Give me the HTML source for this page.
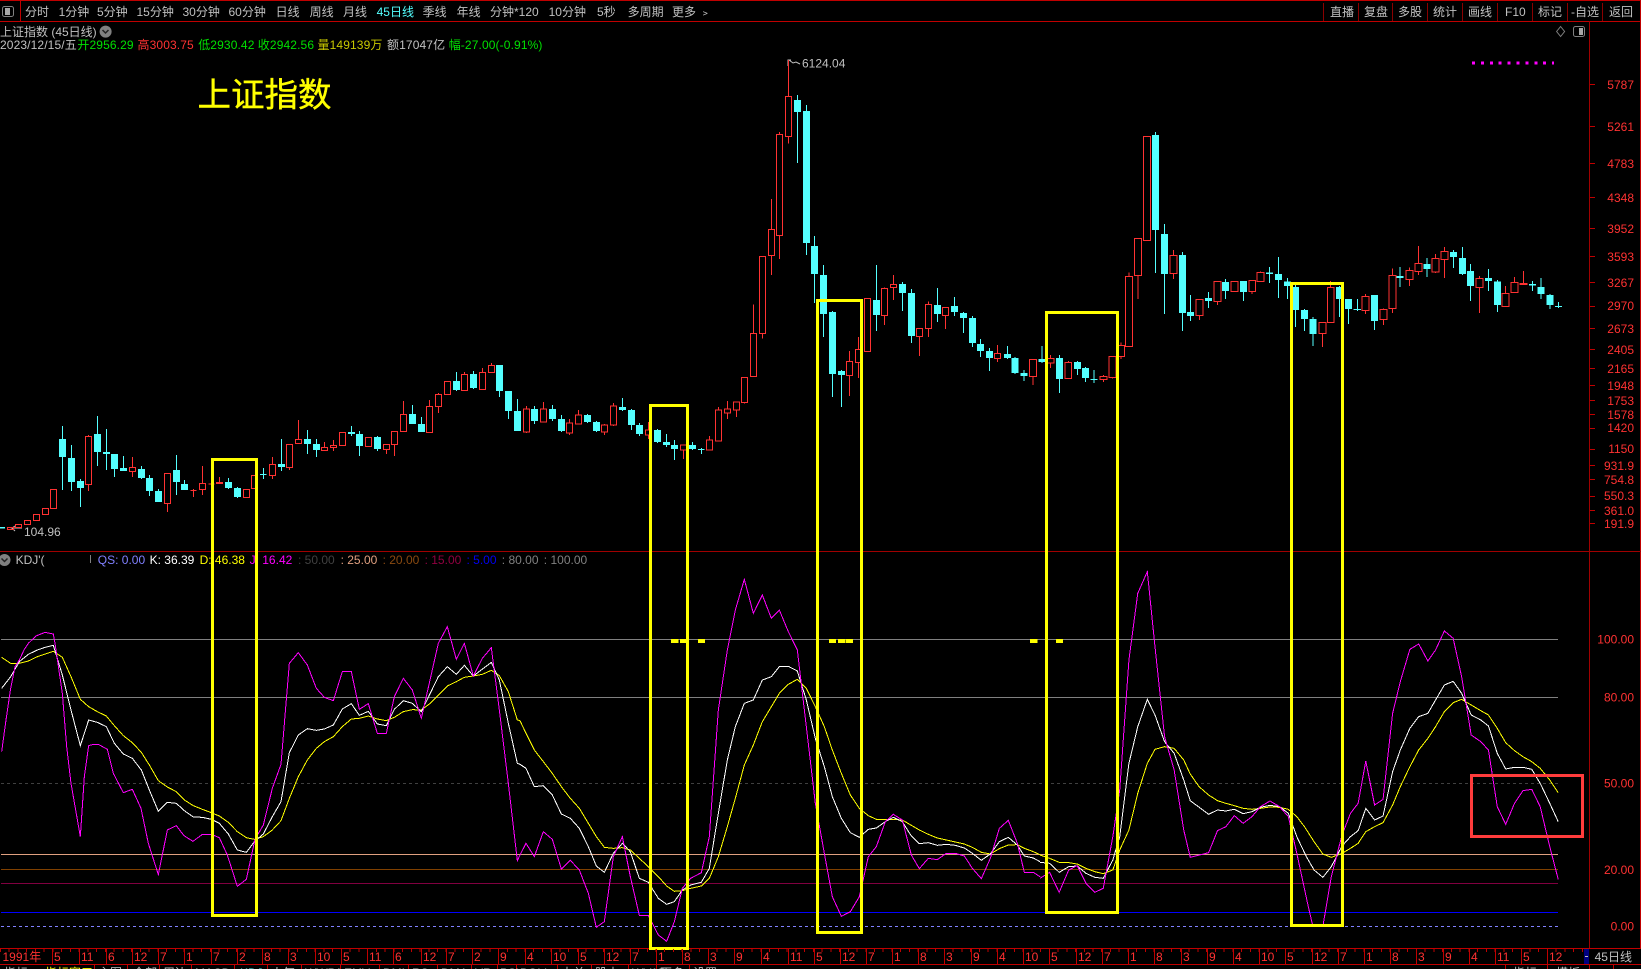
<!DOCTYPE html>
<html lang="zh"><head><meta charset="utf-8"><title>上证指数</title>
<style>
html,body{margin:0;padding:0;background:#000;width:1641px;height:969px;overflow:hidden}
svg{display:block;font-family:"Liberation Sans","WenQuanYi Zen Hei","Noto Sans CJK SC",sans-serif;font-size:12px}
path,polyline,line,rect{vector-effect:non-scaling-stroke}
.c{shape-rendering:crispEdges}
polyline{fill:none;stroke-width:1;shape-rendering:crispEdges}
.red{fill:none;stroke:#ff3232;stroke-width:1}
.cw{fill:none;stroke:#54ffff;stroke-width:1}
.cb{fill:none;stroke:#54ffff;stroke-width:7}
.J{stroke:#ff00ff}.K{stroke:#fff}.D{stroke:#ff0}
.t text{fill:#c0c0c0}
.q{letter-spacing:.12px}
.ax text{fill:#ff3232;text-anchor:end}
.tm text{fill:#ff3232}
</style></head><body>
<svg width="1641" height="969" viewBox="0 0 1641 969" xmlns="http://www.w3.org/2000/svg">
<rect width="1641" height="969" fill="#000"/>
<!-- frame -->
<g class="c" fill="none">
<path d="M0 .5H1641M0 21.5H1641M1640.5 0V949M20.5 0V21" stroke="#c00000"/>
<path d="M1323.5 3V21M1358.5 3V21M1392.5 3V21M1427.5 3V21M1462.5 3V21M1497.5 3V21M1532.5 3V21M1567.5 3V21M1602.5 3V21" stroke="#8a0000"/>
<path d="M1589.5 21V949M0 551.5H1641" stroke="#a00000"/>
<path d="M0 948.5H1641M0 964.5H1641" stroke="#c00000"/>
<path d="M1590 84.5h5M1590 126.5h5M1590 163.5h5M1590 197.5h5M1590 228.5h5M1590 256.5h5M1590 282.5h5M1590 306.5h5M1590 328.5h5M1590 349.5h5M1590 368.5h5M1590 385.5h5M1590 400.5h5M1590 414.5h5M1590 428.5h5M1590 449.5h5M1590 465.5h5M1590 479.5h5M1590 496.5h5M1590 510.5h5M1590 523.5h5" stroke="#c00000"/>
</g>
<!-- toolbar icon -->
<rect x="2.5" y="6.5" width="11" height="10" rx="2" fill="none" stroke="#808080"/><rect x="5" y="8" width="5" height="7" fill="#a8a8a8"/>
<!-- toolbar -->
<g class="t">
<text x="25" y="16">分时</text><text x="58.6" y="16">1分钟</text><text x="97" y="16">5分钟</text><text x="136.5" y="16">15分钟</text><text x="182.5" y="16">30分钟</text><text x="228.5" y="16">60分钟</text><text x="275.6" y="16">日线</text><text x="309.6" y="16">周线</text><text x="343" y="16">月线</text><text x="376.6" y="16" style="fill:#54ffff">45日线</text><text x="422.6" y="16">季线</text><text x="456.6" y="16">年线</text><text x="490" y="16">分钟*120</text><text x="548.6" y="16">10分钟</text><text x="597" y="16">5秒</text><text x="627.6" y="16">多周期</text><text x="672" y="16">更多 ﹥</text>
<text x="1330" y="16">直播</text><text x="1364" y="16">复盘</text><text x="1398" y="16">多股</text><text x="1433" y="16">统计</text><text x="1468" y="16">画线</text><text x="1505" y="16">F10</text><text x="1538" y="16">标记</text><text x="1571" y="16">-自选</text><text x="1609" y="16">返回</text>
<text x="0" y="36">上证指数 (45日线)</text>
<text x="0" y="49" class="q">2023/12/15/五</text>
<text x="387" y="49" class="q">额17047亿</text>
<text x="24" y="536">104.96</text>
<text x="802" y="67.500">6124.04</text>
<text x="15.600" y="564">KDJ'(</text>
</g>
<g>
<text x="77.400" y="49" fill="#00e000" class="q">开2956.29</text>
<text x="137.500" y="49" fill="#ff3232" class="q">高3003.75</text>
<text x="198.200" y="49" fill="#00e000" class="q">低2930.42</text>
<text x="257.800" y="49" fill="#00e000" class="q">收2942.56</text>
<text x="317.500" y="49" fill="#c8c800" class="q">量149139万</text>
<text x="448.700" y="49" fill="#00e000" class="q">幅-27.00(-0.91%)</text>
</g>
<circle cx="105.600" cy="31.600" r="6" fill="#808080"/><path d="M102.500 30l3 3 3-3" fill="none" stroke="#222" stroke-width="1.500"/>
<text x="197.500" y="106.500" fill="#ff0" stroke="#ff0" stroke-width=".4" style="font-family:'Noto Sans CJK SC',sans-serif;font-size:33.500px">上证指数</text>
<path d="M1560.600 26.500l4 5-4 5-4-5z" fill="none" stroke="#808080"/>
<rect x="1573.500" y="26.500" width="11" height="10" rx="2" fill="none" stroke="#808080"/><rect x="1579" y="28" width="4" height="7" fill="#a8a8a8"/>
<path class="c" d="M1472 63h82" stroke="#ff00ff" stroke-width="3" stroke-dasharray="3 5.900" fill="none"/>
<path d="M788 66v-6l3 0M789 60l4 3 3-1 4 2M22 528h-10l3-2M12 528l3 3" fill="none" stroke="#c0c0c0"/>
<g class="ax">
<text x="1634" y="89">5787</text><text x="1634" y="131">5261</text><text x="1634" y="168">4783</text><text x="1634" y="202">4348</text><text x="1634" y="233">3952</text><text x="1634" y="261">3593</text><text x="1634" y="287">3267</text><text x="1634" y="310">2970</text><text x="1634" y="333">2673</text><text x="1634" y="354">2405</text><text x="1634" y="373">2165</text><text x="1634" y="390">1948</text><text x="1634" y="405">1753</text><text x="1634" y="419">1578</text><text x="1634" y="432">1420</text><text x="1634" y="453">1150</text><text x="1634" y="470">931.9</text><text x="1634" y="484">754.8</text><text x="1634" y="500">550.3</text><text x="1634" y="515">361.0</text><text x="1634" y="528">191.9</text>
<text x="1634" y="643.500">100.00</text><text x="1634" y="701.500">80.00</text><text x="1634" y="787.500">50.00</text><text x="1634" y="874">20.00</text><text x="1634" y="930.500">0.00</text>
</g>
<!-- indicator legend -->
<circle cx="4.500" cy="560" r="6" fill="#808080"/><path d="M1.500 558.500l3 3 3-3" fill="none" stroke="#222" stroke-width="1.500"/>
<path d="M90.500 555v8" stroke="#808080"/>
<g>
<text x="97.800" y="564" fill="#8080ff">QS: 0.00</text><text x="149.600" y="564" fill="#fff">K: 36.39</text><text x="199.600" y="564" fill="#ff0">D: 46.38</text><text x="249.600" y="564" fill="#ff00ff">J: 16.42</text>
<text x="298" y="564" fill="#404040">: 50.00</text><text x="340.600" y="564" fill="#e0a080">: 25.00</text><text x="382.600" y="564" fill="#8a4a10">: 20.00</text><text x="424.600" y="564" fill="#900040">: 15.00</text><text x="466.500" y="564" fill="#0000f0">: 5.00</text><text x="501.800" y="564" fill="#808080">: 80.00</text><text x="543.800" y="564" fill="#808080">: 100.00</text>
</g>
<!-- KDJ reference lines -->
<g class="c" fill="none">
<path d="M1 639.500H1558M1 697.500H1558" stroke="#808080"/>
<path d="M1 783.500H1558" stroke="#404040" stroke-dasharray="3 3"/>
<path d="M1 854.500H1558" stroke="#e0a080"/>
<path d="M1 869.500H1558" stroke="#804000"/>
<path d="M1 883.500H1558" stroke="#800040"/>
<path d="M1 912.500H1558" stroke="#0000ff" />
<path d="M1 926.500H1558" stroke="#8080ff" stroke-dasharray="3 3"/>
</g>
<!-- candles -->
<g class="c">
<g transform="translate(0,360) scale(.33333)">
<path class="cw" d="M187 198V390M214 255V393M241 357V441M292 168V318M319 207V330M343 282V351M370 288V333M424 318V357M448 345V408M475 387V426M529 285V405M553 360V390M685 354V387M712 381V414M780 343.500H800M790 324V357M844 237V333M922 210V282M949 237V291M1054 198V228M1078 213V288M1132 228V273M1237 135V192M1264 171V216M1369 36V93M1420 33V87"/>
<path class="cb" d="M187 237V291M214 294V366M241 363V384M292 222V276M319 276V282M343 282V327M370 324V333M424 327V354M448 354V393M475 393V426M529 330V366M553 372V390M685 366V384M712 384V411M844 312V321M922 237V252M949 252V270M1054 216V222M1078 222V258M1132 231V267M1237 162V192M1264 192V216M1369 63V90M1420 42V84"/>
<path d="M0 504H15" stroke="#54ffff" stroke-width="1.500" fill="none"/>
<path class="red" d="M22 502h19V509h-19zM46 493h18V503h-18zM73 482h18V493h-18zM100 463h18V482h-18zM127 445h18V464h-18zM151 388h18V446h-18zM256 229h18V374h-18zM265 225V229M265 374V393M388 322h18V334h-18zM397 291V322M397 334V351M493 340h18V431h-18zM502 431V456M571 391H589M580 387V411M598 370h18V388h-18zM607 318V370M607 388V405M625 372H643M649 367h18V371h-18zM658 351V367M730 388h18V413h-18zM754 346h18V386h-18zM808 313h18V347h-18zM817 291V313M817 347V357M859 253h18V323h-18zM868 323V330M886 238h18V251h-18zM895 180V238M964 263h18V272h-18zM973 246V263M991 256h18V263h-18zM1000 240V256M1000 263V273M1018 217h18V257h-18zM1096 232h18V260h-18zM1150 253h18V269h-18zM1159 269V282M1174 214h18V254h-18zM1183 254V288M1201 163h18V215h-18zM1210 123V163M1279 139h18V218h-18zM1288 120V139M1306 103h18V140h-18zM1315 99V103M1315 140V159M1333 64h18V104h-18zM1384 43h18V92h-18zM1393 36V43M1438 37h18V89h-18zM1447 24V37M1465 16h18V38h-18zM1474 9V16"/>
</g>
<g transform="translate(480,340) scale(.33333)">
<path class="cw" d="M58 75V171M85 153V237M112 177V273M163 198V252M217 195V243M244 225V276M322 222V249M349 243V276M427 174V213M454 207V270M478 249V288M532 267V309M559 282V321M583 300V360M637 306V330M654 328H674M664 324V342"/>
<path class="cb" d="M58 75V153M85 153V213M112 213V273M163 207V243M217 207V237M244 237V273M322 225V246M349 246V273M427 201V210M454 210V255M478 255V282M532 270V306M559 306V315M583 315V327M637 315V327"/>
<path class="red" d="M130 207h18V276h-18zM139 198V207M139 276V279M181 207h18V246h-18zM190 186V207M259 249h18V279h-18zM268 237V249M268 279V285M286 225h18V252h-18zM295 210V225M364 255h18V276h-18zM373 252V255M373 276V285M391 198h18V255h-18zM400 189V198M400 255V258M496 270h18V285h-18zM505 246V270M505 285V297M601 315h18V330h-18zM610 330V357M679 300h18V330h-18zM688 288V300M706 210h18V303h-18zM715 201V210M733 207h18V219h-18zM742 183V207M742 219V237M760 186h18V210h-18zM769 210V231"/>
</g>
<g transform="translate(500,50) scale(.33333)">
<path class="cw" d="M892 135V339M919 165V615M943 558V759M970 645V861M997 783V1041M1024 960V1071M1129 645V843M1207 696V783M1234 717V879M1312 714V816M1363 741V798M1390 786V849M1417 798V891M1441 867V921M1468 894V963"/>
<path class="cb" d="M892 150V186M919 183V579M943 588V672M970 675V792M997 786V972M1024 963V975M1129 750V795M1207 702V729M1234 729V858M1312 765V792M1363 768V786M1390 789V804M1417 804V879M1441 882V903M1468 903V924"/>
<path class="red" d="M724 982h18V1058h-18zM733 1058V1061M751 850h18V980h-18zM760 763V850M778 619h18V851h-18zM787 851V866M805 538h18V617h-18zM814 447V538M814 617V675M829 253h18V557h-18zM838 246V253M838 557V627M856 139h18V260h-18zM865 30V139M865 260V281M1039 934h18V977h-18zM1048 903V934M1048 977V1038M1066 898h18V938h-18zM1075 861V898M1075 938V984M1093 745h18V905h-18zM1144 715h18V797h-18zM1153 712V715M1153 797V825M1171 703h18V713h-18zM1180 675V703M1180 713V750M1249 835h18V860h-18zM1258 860V918M1276 763h18V836h-18zM1285 754V763M1285 836V861M1327 772h18V796h-18zM1336 796V837M1483 910h18V926h-18zM1492 885V910M1492 926V936"/>
</g>
<g transform="translate(1000,110) scale(.40883,.33333)">
<path class="cw" d="M18 708V747M37 741V792M59 780V813M103 708V759M145 735V849M189 753V795M209 771V816M221 808.500H239M230 780V819M380 66V489M402 342V612M446 426V663M466 555V633M510 546V594M551 507V567M595 513V573M659 471V519M681 441V564M703 504V567M723 516V651M745 597V663M766 621V708M830 528V621M852 567V642M865 598.500H883M874 567V603M916 555V660M979 471V531M1045 444V501M1109 420V474M1131 411V495M1151 462V573M1195 477V543M1217 510V606M1302 513V543M1323 504V567M1345 552V597M1357 590H1375M1366 576V594"/>
<path class="cb" d="M18 732V744M37 744V789M59 789V798M103 747V756M145 744V807M189 756V777M209 774V804M380 75V360M402 372V492M446 435V609M466 606V618M510 564V573M551 516V543M595 513V546M659 487V492M681 492V510M703 514V528M723 531V600M745 600V627M766 627V672M830 531V567M852 567V597M916 555V633M979 498V504M1045 462V477M1109 426V441M1131 444V492M1151 483V528M1195 504V513M1217 514V585M1302 522V527M1323 531V552M1345 555V585"/>
<path class="red" d="M72.500 748h17V800h-17zM81 800V825M115.500 745h17V759h-17zM124 735V745M124 759V774M158.500 757h17V806h-17zM167 753V757M244.500 799h17V808h-17zM253 795V799M253 808V816M266.500 739h17V802h-17zM275 802V806M287.500 706h17V740h-17zM296 697V706M296 740V747M307.500 499h17V710h-17zM316 487V499M329.500 385h17V496h-17zM338 496V567M351.500 79h17V392h-17zM415.500 436h17V491h-17zM424 420V436M424 491V507M479.500 568h17V617h-17zM488 617V630M523.500 515h17V575h-17zM532 575V585M565.500 515h17V545h-17zM608.500 511h17V545h-17zM617 545V552M628.500 488h17V515h-17zM637 484V488M780.500 637h17V671h-17zM789 671V711M800.500 532h17V638h-17zM809 513V532M885.500 559h17V602h-17zM894 552V559M894 602V612M929.500 598h17V629h-17zM938 595V598M938 629V645M951.500 496h17V596h-17zM960 475V496M960 596V609M993.500 481h17V509h-17zM1002 472V481M1002 509V528M1015.500 460h17V485h-17zM1024 408V460M1024 485V495M1056.500 445h17V486h-17zM1065 432V445M1065 486V489M1078.500 424h17V449h-17zM1087 411V424M1087 449V504M1164.500 505h17V533h-17zM1173 498V505M1173 533V609M1228.500 550h17V590h-17zM1237 528V550M1249.500 517h17V548h-17zM1258 501V517M1271.500 520h17V524h-17zM1280 483V520"/>
</g>
</g>
<!-- KDJ lines -->
<g transform="translate(0,560) scale(.33333)">
<polyline class="D" points="5,292 32,310 58,310 85,303 112,290 160,274 187,292 213,350 241,418 266,440 292,455 319,468 343,497 370,527 397,548 424,577 448,615 475,662 502,681 529,695 553,720 580,737 607,748 634,758 658,768 685,787 712,815 739,833 763,838 790,830 817,810 843,782 868,715 895,650 922,600 949,565 973,545 1000,530 1027,500 1054,477 1078,475 1105,468 1132,477 1159,482 1183,472 1210,455 1237,449 1264,450 1291,430 1315,405 1342,378 1369,365 1393,352 1420,348 1447,343 1474,331 1498,347 1525,395 1552,480 1560,482"/>
<polyline class="K" points="5,385 32,350 58,305 85,283 112,270 135,262 160,256 187,345 213,450 241,557 266,480 292,487 319,500 343,550 370,582 397,595 424,630 448,690 475,754 502,727 529,730 553,752 580,771 607,772 634,778 658,790 685,822 712,870 739,877 763,845 790,822 817,770 843,725 868,578 895,525 922,506 949,511 973,507 1000,495 1027,447 1054,431 1078,466 1105,454 1132,492 1159,497 1183,448 1210,422 1237,430 1264,455 1315,350 1342,320 1369,343 1393,316 1420,348 1474,307 1498,360 1525,490 1552,610 1560,613"/>
<polyline class="J" points="5,575 18,480 32,385 45,320 58,300 72,270 85,250 108,228 135,217 160,222 165,250 187,400 200,560 213,670 241,830 253,650 266,557 280,553 295,553 322,568 340,640 370,698 397,688 423,745 445,850 475,944 502,810 529,797 552,827 579,844 607,823 634,823 658,833 682,885 712,979 739,958 765,838 790,795 817,685 843,613 868,310 895,278 922,315 949,385 973,412 1000,422 1027,335 1054,335 1078,448 1105,431 1132,520 1159,520 1183,410 1210,355 1237,390 1264,475 1315,250 1342,200 1369,298 1393,250 1420,348 1447,295 1474,263 1498,450 1525,670 1552,902 1560,885"/>
</g>
<g transform="translate(520,560) scale(.33333)">
<polyline class="D" points="0,482 18,520 43,570 70,605 97,640 124,680 151,715 178,745 205,790 229,830 253,862 280,865 307,863 331,870 358,895 385,920 415,950 440,978 463,994 487,992 512,985 544,978 568,955 595,890 622,800 646,715 673,615 700,555 727,485 754,440 778,400 805,373 832,358 859,385 886,440 913,500 937,570 964,640 991,705 1018,745 1045,767 1069,778 1096,778 1120,778 1147,780 1174,796 1198,810 1225,823 1252,834 1279,840 1306,846 1333,852 1357,862 1384,877 1411,882 1438,866 1465,855 1492,854 1513,865 1540,875 1560,884"/>
<polyline class="K" points="0,613 18,625 43,680 70,677 97,705 124,762 151,775 178,805 205,860 229,918 253,937 280,880 307,850 331,875 358,955 385,967 415,1015 440,1033 463,1025 487,990 512,975 544,967 568,925 595,760 622,600 646,500 673,430 700,420 727,360 754,350 778,320 805,319 832,333 859,420 886,535 913,620 937,710 964,775 991,818 1018,832 1045,808 1069,804 1096,785 1120,772 1147,785 1174,828 1198,851 1225,848 1252,856 1279,853 1306,856 1333,864 1357,880 1384,901 1411,882 1438,845 1465,832 1492,855 1513,888 1540,894 1560,905"/>
<polyline class="J" points="0,885 18,850 43,890 70,815 97,838 124,927 151,901 178,930 205,1000 229,1102 253,1085 280,890 307,830 331,950 358,1066 385,1066 415,1125 440,1144 463,1085 487,985 512,955 544,938 568,830 595,450 622,270 646,150 673,58 700,160 727,105 754,175 778,150 805,215 832,270 859,500 886,730 913,880 937,1010 964,1069 991,1055 1018,1010 1045,890 1069,860 1096,785 1120,763 1147,780 1174,885 1198,926 1225,895 1252,899 1279,880 1306,880 1333,888 1357,925 1384,956 1411,895 1438,805 1465,781 1492,850 1513,937 1540,937 1560,950"/>
</g>
<g transform="translate(1040,560) scale(.38329,.33333)">
<polyline class="D" points="0,885 25,895 50,907 75,908 97,912 120,925 143,935 165,941 190,930 208,870 232,810 255,700 280,610 300,568 325,560 350,565 375,600 392,642 415,680 440,705 463,722 485,730 507,737 530,745 553,748 575,745 600,741 625,742 648,748 670,770 690,800 715,845 738,882 760,892 788,880 810,865 830,850 850,815 873,800 895,788 920,735 940,680 965,620 988,570 1012,535 1032,500 1055,455 1078,428 1100,418 1125,435 1150,452 1170,465 1193,505 1215,548 1238,572 1260,590 1283,605 1305,625 1330,660 1352,698"/>
<polyline class="K" points="0,907 25,910 50,937 75,920 97,918 120,940 143,952 165,955 190,900 208,830 232,610 255,500 280,418 300,465 325,545 350,580 375,660 392,722 440,763 463,750 485,753 507,748 530,761 553,755 575,742 600,736 625,740 648,760 670,830 695,890 715,930 738,952 760,920 788,858 810,830 830,812 850,745 873,780 895,768 920,635 940,570 965,505 988,470 1012,460 1032,420 1055,375 1078,364 1100,400 1125,465 1150,480 1170,498 1193,580 1215,627 1238,622 1260,622 1283,628 1305,670 1330,730 1352,785"/>
<polyline class="J" points="0,955 25,937 50,997 75,930 97,917 120,970 143,997 165,985 190,830 208,690 232,300 255,100 280,35 300,260 325,530 350,630 375,810 392,892 440,878 463,812 485,800 507,767 530,790 553,770 575,740 600,723 625,740 648,770 670,880 700,1040 712,1099 738,1099 760,950 788,825 810,760 830,730 850,603 873,735 895,718 920,460 940,365 965,268 988,252 1012,303 1032,270 1055,213 1078,235 1100,350 1125,525 1150,545 1170,570 1193,740 1215,793 1238,730 1260,692 1283,688 1305,740 1330,860 1352,958"/>
</g>
<!-- yellow dashes -->
<path class="c" d="M671 641H678.500M680 641H686M698 641H705M829 641H836M838 641H845M845.700 641H853M1030 641H1037.500M1056 641H1063" stroke="#ff0" stroke-width="4" fill="none"/>
<!-- annotation boxes -->
<g class="c" fill="none" stroke="#ff0" stroke-width="3">
<rect x="212.500" y="459.500" width="44" height="456"/>
<rect x="650.500" y="405.500" width="37" height="543"/>
<rect x="817.500" y="300.500" width="44" height="632"/>
<rect x="1046.500" y="312.500" width="71" height="600"/>
<rect x="1291.500" y="283.500" width="51" height="642"/>
</g>
<rect class="c" x="1471.500" y="775.500" width="111" height="61" fill="none" stroke="#ff3c3c" stroke-width="3"/>
<!-- time axis -->
<path class="c" d="M0 950.500H1584" stroke="#c00000" stroke-width="3" stroke-dasharray="1 7.740" fill="none"/>
<path class="c" d="M52.500 949V964M79.500 949V964M106.500 949V964M132.500 949V964M158.500 949V964M184.500 949V964M211.500 949V964M237.500 949V964M262.500 949V964M288.500 949V964M315.500 949V964M341.500 949V964M367.500 949V964M393.500 949V964M421.500 949V964M446.500 949V964M472.500 949V964M498.500 949V964M525.500 949V964M551.500 949V964M578.500 949V964M604.500 949V964M630.500 949V964M656.500 949V964M682.500 949V964M708.500 949V964M734.500 949V964M761.500 949V964M788.500 949V964M814.500 949V964M840.500 949V964M866.500 949V964M892.500 949V964M918.500 949V964M944.500 949V964M971.500 949V964M997.500 949V964M1023.500 949V964M1049.500 949V964M1076.500 949V964M1102.500 949V964M1128.500 949V964M1154.500 949V964M1181.500 949V964M1207.500 949V964M1233.500 949V964M1259.500 949V964M1285.500 949V964M1312.500 949V964M1338.500 949V964M1364.500 949V964M1390.500 949V964M1416.500 949V964M1443.500 949V964M1469.500 949V964M1495.500 949V964M1521.500 949V964M1547.500 949V964" stroke="#c00000" fill="none"/>
<g class="tm">
<text x="2.500" y="961">1991年</text><text x="54" y="961">5</text><text x="81" y="961">11</text><text x="108" y="961">6</text><text x="134" y="961">12</text><text x="160" y="961">7</text><text x="186" y="961">1</text><text x="213" y="961">7</text><text x="239" y="961">2</text><text x="264" y="961">8</text><text x="290" y="961">3</text><text x="317" y="961">10</text><text x="343" y="961">5</text><text x="369" y="961">11</text><text x="395" y="961">6</text><text x="423" y="961">12</text><text x="448" y="961">7</text><text x="474" y="961">2</text><text x="500" y="961">9</text><text x="527" y="961">4</text><text x="553" y="961">10</text><text x="580" y="961">5</text><text x="606" y="961">12</text><text x="632" y="961">7</text><text x="658" y="961">1</text><text x="684" y="961">8</text><text x="710" y="961">3</text><text x="736" y="961">9</text><text x="763" y="961">4</text><text x="790" y="961">11</text><text x="816" y="961">5</text><text x="842" y="961">12</text><text x="868" y="961">7</text><text x="894" y="961">1</text><text x="920" y="961">8</text><text x="946" y="961">3</text><text x="973" y="961">9</text><text x="999" y="961">4</text><text x="1025" y="961">10</text><text x="1051" y="961">5</text><text x="1078" y="961">12</text><text x="1104" y="961">7</text><text x="1130" y="961">1</text><text x="1156" y="961">8</text><text x="1183" y="961">3</text><text x="1209" y="961">9</text><text x="1235" y="961">4</text><text x="1261" y="961">10</text><text x="1287" y="961">5</text><text x="1314" y="961">12</text><text x="1340" y="961">7</text><text x="1366" y="961">1</text><text x="1392" y="961">8</text><text x="1418" y="961">3</text><text x="1445" y="961">9</text><text x="1471" y="961">4</text><text x="1497" y="961">11</text><text x="1523" y="961">5</text><text x="1549" y="961">12</text>
</g>
<rect x="1584" y="949" width="5" height="15" fill="#000080"/><rect x="1585" y="956" width="3" height="1" fill="#c0c0c0"/>
<text x="1594.600" y="961" fill="#c0c0c0">45日线</text>
<!-- bottom tabs clipped -->
<path class="c" d="M94.500 965V969M127.500 965V969M159.500 965V969M191.500 965V969M234.500 965V969M267.500 965V969M301.500 965V969M340.500 965V969M379.500 965V969M408.500 965V969M437.500 965V969M471.500 965V969M497.500 965V969M516.500 965V969M557.500 965V969M591.500 965V969M628.500 965V969M656.500 965V969M689.500 965V969M1505.500 965V969M1547.500 965V969M1589.500 965V969M1613.500 965V969" stroke="#c00000" fill="none"/>
<g class="t">
<text x="4" y="977">指标</text><text x="45" y="977" style="fill:#ff0">指标窗口</text><text x="98" y="977">主图</text><text x="133" y="977">全部</text><text x="163" y="977">周边</text><text x="195" y="977">MACD</text><text x="240" y="977" style="fill:#54ffff">KDJ</text><text x="271" y="977">人气</text><text x="305" y="977">WWPA</text><text x="344" y="977">EMV</text><text x="383" y="977">DMI</text><text x="412" y="977">RS</text><text x="441" y="977">DMA</text><text x="475" y="977">VR</text><text x="500" y="977">PSY</text><text x="520" y="977">BOLL</text><text x="561" y="977">大单</text><text x="595" y="977">股本</text><text x="632" y="977">WVAD</text><text x="660" y="977">更多</text><text x="693" y="977">设置</text>
<text x="1513" y="977">指标</text><text x="1556" y="977">模板</text>
</g>
</svg>
</body></html>
